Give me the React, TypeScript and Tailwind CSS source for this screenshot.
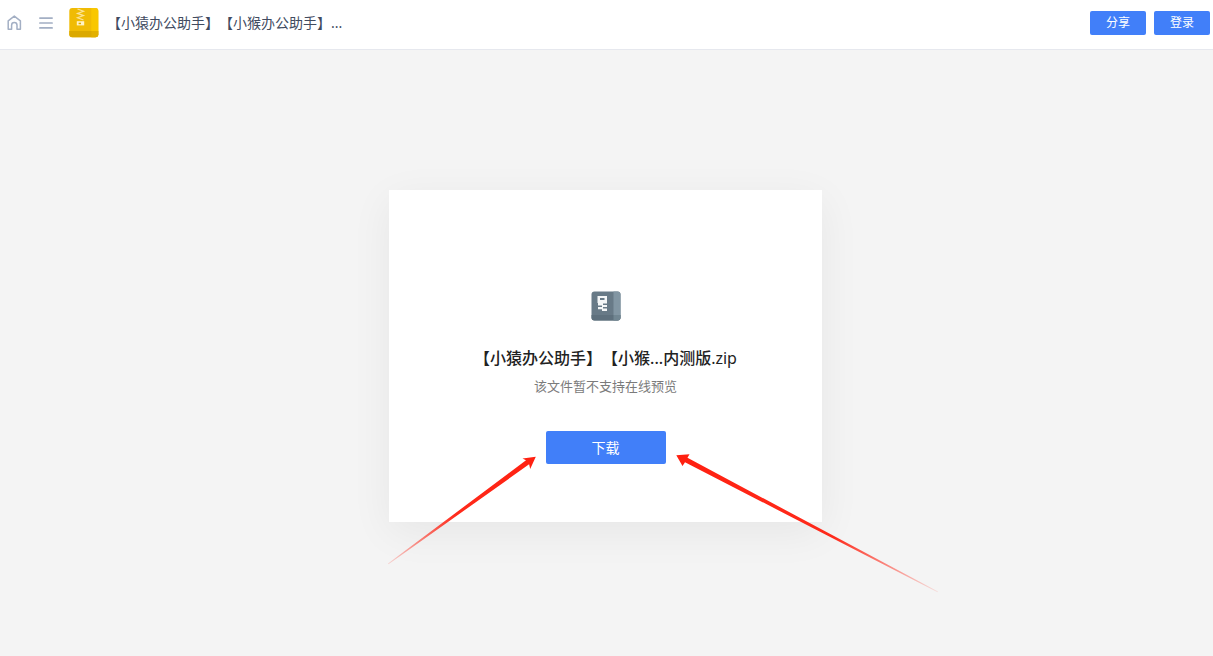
const HomeIcon = () => (
  <svg width="16" height="16" viewBox="0 0 16 16" fill="none" stroke="#a3afc4" strokeWidth="1.5" strokeLinejoin="round">
    <path d="M2.2 5.8 L8.3 1.1 L14.4 5.8 V14.3 H11 V10.2 A2.7 2.7 0 0 0 5.6 10.2 V14.3 H2.2 Z" />
  </svg>
)

const MenuIcon = () => (
  <svg width="14" height="12" viewBox="0 0 14 12" fill="none" stroke="#a3afc4" strokeWidth="1.7" strokeLinecap="round">
    <path d="M0.9 1.1H13.1M0.9 6H13.1M0.9 10.9H13.1" />
  </svg>
)

const ZipIcon = () => (
  <svg width="30" height="30" viewBox="0 0 30 30">
    <rect x="0.3" y="0" width="29" height="29.3" rx="3" fill="#f0bb04" />
    <path d="M22.3 0H26.3A3 3 0 0 1 29.3 3V23H22.3Z" fill="#f9c700" />
    <path d="M0.3 23H29.3V26.3A3 3 0 0 1 26.3 29.3H3.3A3 3 0 0 1 0.3 26.3Z" fill="#dba900" />
    <path d="M22.3 23H29.3V26.3A3 3 0 0 1 26.3 29.3H22.3Z" fill="#e2b000" />
    <path d="M8.5 1L14.5 3.2L8.5 5.4L14.5 7.6L8.5 9.8L14.5 12" fill="none" stroke="#fbe49a" strokeWidth="1.2" />
    <path d="M7.8 13.2H15.2V17.4H7.8Z" fill="#fff3c4" />
    <path d="M9.6 14.7H12V16.2H9.6Z" fill="#dba900" />
  </svg>
)

const ArchiveIcon = () => (
  <svg width="30" height="30" viewBox="0 0 30 30">
    <rect x="0.5" y="0.5" width="29" height="29" rx="3" fill="#687a87" />
    <path d="M22.5 0.5H26.5A3 3 0 0 1 29.5 3.5V24H22.5Z" fill="#8296a3" />
    <path d="M0.5 24H29.5V26.5A3 3 0 0 1 26.5 29.5H3.5A3 3 0 0 1 0.5 26.5Z" fill="#5e707d" />
    <path d="M22.5 24H29.5V26.5A3 3 0 0 1 26.5 29.5H22.5Z" fill="#718692" />
    <path fillRule="evenodd" d="M6.5 5H16V12.5H12V14H16V16H12V17.5H16V20H11V18.2H7V16H11V14.5H7V12H6.5ZM9 7V9H13.5V7Z" fill="#f4f6f7" />
  </svg>
)

// Hand-drawn pointers towards the download button, laid over the page
const Arrows = () => (
  <svg
    className="pointer-events-none absolute top-[260px] left-1/2 -translate-x-1/2"
    width="671"
    height="150"
    viewBox="270 450 671 150"
  >
    <defs>
      <linearGradient id="arrowLeft" gradientUnits="userSpaceOnUse" x1="388" y1="564" x2="535" y2="457">
        <stop offset="0" stopColor="#ff2010" stopOpacity="0.15" />
        <stop offset="0.45" stopColor="#ff2010" stopOpacity="0.95" />
        <stop offset="1" stopColor="#ff2010" />
      </linearGradient>
      <linearGradient id="arrowRight" gradientUnits="userSpaceOnUse" x1="937" y1="592" x2="676" y2="455">
        <stop offset="0" stopColor="#ff2010" stopOpacity="0.1" />
        <stop offset="0.4" stopColor="#ff2010" stopOpacity="0.95" />
        <stop offset="1" stopColor="#ff2010" />
      </linearGradient>
    </defs>
    <path d="M387.5 563.5L525.5 460.3L522 458.5L535.3 456.8L529.7 469L528.6 464.3L388 564.3Z" fill="url(#arrowLeft)" />
    <path d="M937.5 591.5L687 457.8L689 454.2L675.8 455.2L682 466L684.5 462.2L937 592.3Z" fill="url(#arrowRight)" />
  </svg>
)

const App = () => {
  return (
    <div className="flex min-h-screen flex-col bg-[#f4f4f4] font-['Noto_Sans','Noto_Sans_CJK_SC',sans-serif] [text-spacing-trim:space-all]">
      <header className="flex h-[50px] items-center justify-between border-b border-[#e6e8ee] bg-white pr-[3px] pb-1 pl-1.5">
        <div className="flex items-center">
          <button type="button" aria-label="首页">
            <HomeIcon />
          </button>
          <button type="button" aria-label="菜单" className="ml-[17px]">
            <MenuIcon />
          </button>
          <div className="ml-4 flex items-center gap-2">
            <ZipIcon />
            <h1 className="text-sm text-[#414b5f]">【小猿办公助手】【小猴办公助手】...</h1>
          </div>
        </div>
        <div className="flex gap-2">
          <button type="button" className="h-6 w-14 rounded-xs bg-[#417ff9] text-xs text-white">
            分享
          </button>
          <button type="button" className="h-6 w-14 rounded-xs bg-[#417ff9] text-xs text-white">
            登录
          </button>
        </div>
      </header>

      <main className="flex flex-1 items-center justify-center pt-1.5">
        <section className="relative mr-0.5 flex w-[433px] flex-col items-center bg-white pt-[101px] pb-[58px] shadow-[0_10px_40px_rgba(0,0,0,0.06)]">
          <ArchiveIcon />
          <h2 className="mt-[25px] text-base leading-6 font-medium text-[#222]">
            【小猿办公助手】【小猴...内测版<span className="font-normal">.zip</span>
          </h2>
          <p className="mt-1.5 text-[13px] leading-5 text-[#7b7b7b]">该文件暂不支持在线预览</p>
          <button type="button" className="mt-[35px] h-[33px] w-[120px] rounded-xs bg-[#417ff9] text-sm text-white">
            下载
          </button>
          <Arrows />
        </section>
      </main>
    </div>
  )
}

export default App
